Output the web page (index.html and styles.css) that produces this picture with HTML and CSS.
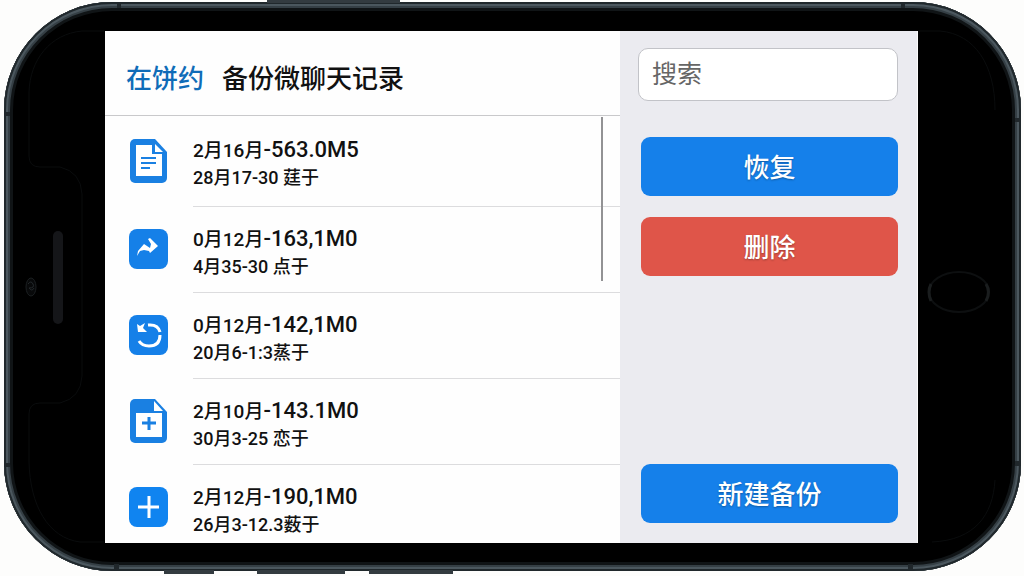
FILE: index.html
```html
<!DOCTYPE html>
<html lang="zh-CN">
<head>
    <meta charset="UTF-8">
    <meta name="viewport" content="width=device-width, initial-scale=1.0">
    <title>备份微聊天记录</title>
    <link rel="stylesheet" href="styles.css">
</head>
<body>
    <div class="phone">
        <!-- Bezel details: side keys, antenna bands, notch, speaker, camera, home button -->
        <svg class="phone-details" viewBox="0 0 1024 576" preserveAspectRatio="none" aria-hidden="true">
            <g fill="#333b40">
                <rect x="267" y="0" width="133" height="3"/>
                <rect x="164" y="570" width="50" height="4"/>
                <rect x="257" y="570" width="88" height="4"/>
                <rect x="369" y="570" width="84" height="4"/>
            </g>
            <g fill="#20272b">
                <rect x="117" y="2" width="4" height="6"/>
                <rect x="901" y="2" width="4" height="6"/>
                <rect x="114" y="564" width="5" height="6"/>
                <rect x="908" y="564" width="5" height="6"/>
                <rect x="4" y="112" width="6" height="4"/>
                <rect x="4" y="463" width="6" height="4"/>
                <rect x="1015" y="118" width="6" height="4"/>
                <rect x="1015" y="461" width="6" height="5"/>
            </g>
            <g fill="none" stroke="#0a0c0d">
                <path d="M104 31H82C50 34 30 60 29 92V156Q29 167 40 167H60Q81 172 82 194V376Q81 398 60 403H40Q29 403 29 414V462C30 505 48 538 80 542H104"/>
                <path d="M919 31H940C975 34 995 65 995 110M995 480C993 515 975 540 932 542"/>
            </g>
            <rect x="53" y="231" width="10" height="93" rx="5" fill="#151619"/>
            <ellipse cx="31" cy="287" rx="5" ry="9" fill="#08090a" stroke="#1b1f21"/>
            <path d="M28 284q3-4 5 0t-4 4q3 4 5 0" fill="none" stroke="#24292c"/>
            <ellipse cx="959" cy="292" rx="30" ry="20" fill="none" stroke="#0d0f10" stroke-width="2"/>
            <path d="M931 284Q927 292 931 301M986 284Q991 292 986 301" fill="none" stroke="#1a1d1e" stroke-width="3"/>
        </svg>

        <div class="screen">
            <main class="content">
                <header class="header">
                    <a class="back" href="#">在饼约</a>
                    <h1>备份微聊天记录</h1>
                </header>
                <ul class="backup-list">
                    <li class="backup">
                        <svg class="icon" viewBox="0 0 40 46" aria-hidden="true">
                            <path d="M6 1h20l12 13v26a5 5 0 0 1-5 5H6a5 5 0 0 1-5-5V6a5 5 0 0 1 5-5z" fill="#1a80e2"/>
                            <path d="M7 7h16v9h10v22H7z" fill="#fff"/>
                            <path d="M26 6v8h8z" fill="#fff"/>
                            <path d="M12 20h15M12 25h15M12 30h9" stroke="#1a80e2" stroke-width="2"/>
                        </svg>
                        <div class="backup-text">
                            <p class="backup-title"><span class="date">2月16月</span>-563.0M5</p>
                            <p class="backup-note">28月17-30 莛于</p>
                        </div>
                    </li>
                    <li class="backup">
                        <svg class="icon" viewBox="0 0 40 46" aria-hidden="true">
                            <rect x="0" y="3" width="39" height="40" rx="8" fill="#1580e8"/>
                            <path d="M8 30L9 25L15 18L18 20L21 22L22 18L19 13L21 12L29 20L21 27L20 25L15 24L11 25Z" fill="#fff"/>
                        </svg>
                        <div class="backup-text">
                            <p class="backup-title"><span class="date">0月12月</span>-163,1M0</p>
                            <p class="backup-note">4月35-30 点于</p>
                        </div>
                    </li>
                    <li class="backup">
                        <svg class="icon" viewBox="0 0 40 46" aria-hidden="true">
                            <rect x="0" y="3" width="39" height="40" rx="8" fill="#1580e8"/>
                            <path d="M19 13Q29 12 31 20M31 23Q31 34 20 34Q13 34 10 29" fill="none" stroke="#fff" stroke-width="3"/>
                            <path d="M8 12L11 14L16 11L14 16L18 20H9Z" fill="#fff"/>
                        </svg>
                        <div class="backup-text">
                            <p class="backup-title"><span class="date">0月12月</span>-142,1M0</p>
                            <p class="backup-note">20月6-1:3蒸于</p>
                        </div>
                    </li>
                    <li class="backup">
                        <svg class="icon" viewBox="0 0 40 46" aria-hidden="true">
                            <path d="M6 1h20l12 13v26a5 5 0 0 1-5 5H6a5 5 0 0 1-5-5V6a5 5 0 0 1 5-5z" fill="#1a80e2"/>
                            <path d="M7 15h26v24H7zM25 3v10h9z" fill="#fff"/>
                            <path d="M20 19v13M13 25h14" stroke="#1a80e2" stroke-width="3"/>
                        </svg>
                        <div class="backup-text">
                            <p class="backup-title"><span class="date">2月10月</span>-143.1M0</p>
                            <p class="backup-note">30月3-25 恋于</p>
                        </div>
                    </li>
                    <li class="backup">
                        <svg class="icon" viewBox="0 0 40 46" aria-hidden="true">
                            <rect x="0" y="3" width="39" height="40" rx="8" fill="#1084f0"/>
                            <path d="M20 12v22M9 23h21" stroke="#fff" stroke-width="3"/>
                        </svg>
                        <div class="backup-text">
                            <p class="backup-title"><span class="date">2月12月</span>-190,1M0</p>
                            <p class="backup-note">26月3-12.3薮于</p>
                        </div>
                    </li>
                </ul>
            </main>

            <aside class="sidebar">
                <input class="search" type="search" placeholder="搜索" aria-label="搜索">
                <div class="actions">
                    <button class="btn" type="button">恢复</button>
                    <button class="btn btn-danger" type="button">删除</button>
                    <button class="btn btn-new" type="button">新建备份</button>
                </div>
            </aside>
        </div>
    </div>
</body>
</html>
```

FILE: styles.css
```css
* {
    margin: 0;
    padding: 0;
    box-sizing: border-box;
}

body {
    font-family: Roboto, "Noto Sans CJK SC", sans-serif;
    background-color: #fdfdfc;
    color: #111;
    padding: 2px 3px 5px 4px;
}

.phone {
    display: flex;
    height: calc(100vh - 7px);
    min-height: 400px;
    padding: 29px 103px 28px 101px;
    background-color: #000;
    border-radius: 108px;
    box-shadow: inset 0 0 0 2px #20282c, inset 0 0 0 4px #4b575e, inset 0 0 0 6px #353f45, inset 0 0 0 9px #101416;
}

.phone-details {
    position: absolute;
    top: 0;
    left: 0;
    width: 100%;
    height: 100vh;
    pointer-events: none;
}

.screen {
    display: flex;
    flex: 1;
    overflow: hidden;
    background-color: #fefefe;
}

.content {
    display: flex;
    flex-direction: column;
    flex: 1;
    min-width: 0;
}

.header {
    display: flex;
    align-items: center;
    flex: none;
    gap: 18px;
    height: 85px;
    padding: 6px 21px 0;
    border-bottom: 1px solid #c9c9cb;
}

.back {
    color: #0f6cb8;
    font-size: 26px;
    font-weight: 500;
    text-decoration: none;
}

h1 {
    font-size: 26px;
    font-weight: 500;
}

/* List of backups */
.backup-list {
    position: relative;
    flex: 1;
    overflow: hidden;
    list-style: none;
}

/* Scrollbar thumb */
.backup-list::after {
    content: "";
    position: absolute;
    top: 1px;
    right: 17px;
    width: 2px;
    height: 164px;
    background-color: #929294;
}

.backup {
    display: flex;
    align-items: center;
    gap: 24px;
    height: 86px;
    padding-left: 24px;
}

.backup:first-child {
    height: 90px;
}

.icon {
    flex: none;
    width: 40px;
    height: 46px;
}

.backup-text {
    display: flex;
    flex-direction: column;
    justify-content: center;
    flex: 1;
    height: 100%;
    padding-top: 5px;
    white-space: nowrap;
}

.backup + .backup .backup-text {
    border-top: 1px solid #dcdcde;
}

.backup-title {
    font-size: 22px;
    font-weight: 500;
    line-height: 28px;
}

.date {
    font-size: 19px;
}

.backup-note {
    font-size: 18px;
    font-weight: 500;
    line-height: 26px;
}

.sidebar {
    display: flex;
    flex-direction: column;
    flex: none;
    gap: 36px;
    width: 298px;
    padding: 17px 19px 20px 18px;
    background-color: #ebebf0;
    border-right: 1px solid #fafafa;
}

.search {
    width: 100%;
    height: 53px;
    padding: 0 13px;
    border: 1px solid #c2c3c8;
    border-radius: 10px;
    background-color: #fff;
    color: #333;
    font-family: inherit;
    font-size: 25px;
}

.search::placeholder {
    color: #666;
}

.actions {
    display: flex;
    flex-direction: column;
    flex: 1;
    gap: 21px;
    padding-left: 3px;
}

.btn {
    height: 59px;
    padding-bottom: 2px;
    border: none;
    border-radius: 9px;
    background-color: #1580ea;
    color: #fff;
    font-family: inherit;
    font-size: 26px;
    font-weight: 500;
    text-shadow: 0 1px 2px rgba(0, 0, 0, 0.3);
    cursor: pointer;
}

.btn-danger {
    background-color: #df5549;
}

.btn-new {
    margin-top: auto;
}
```
